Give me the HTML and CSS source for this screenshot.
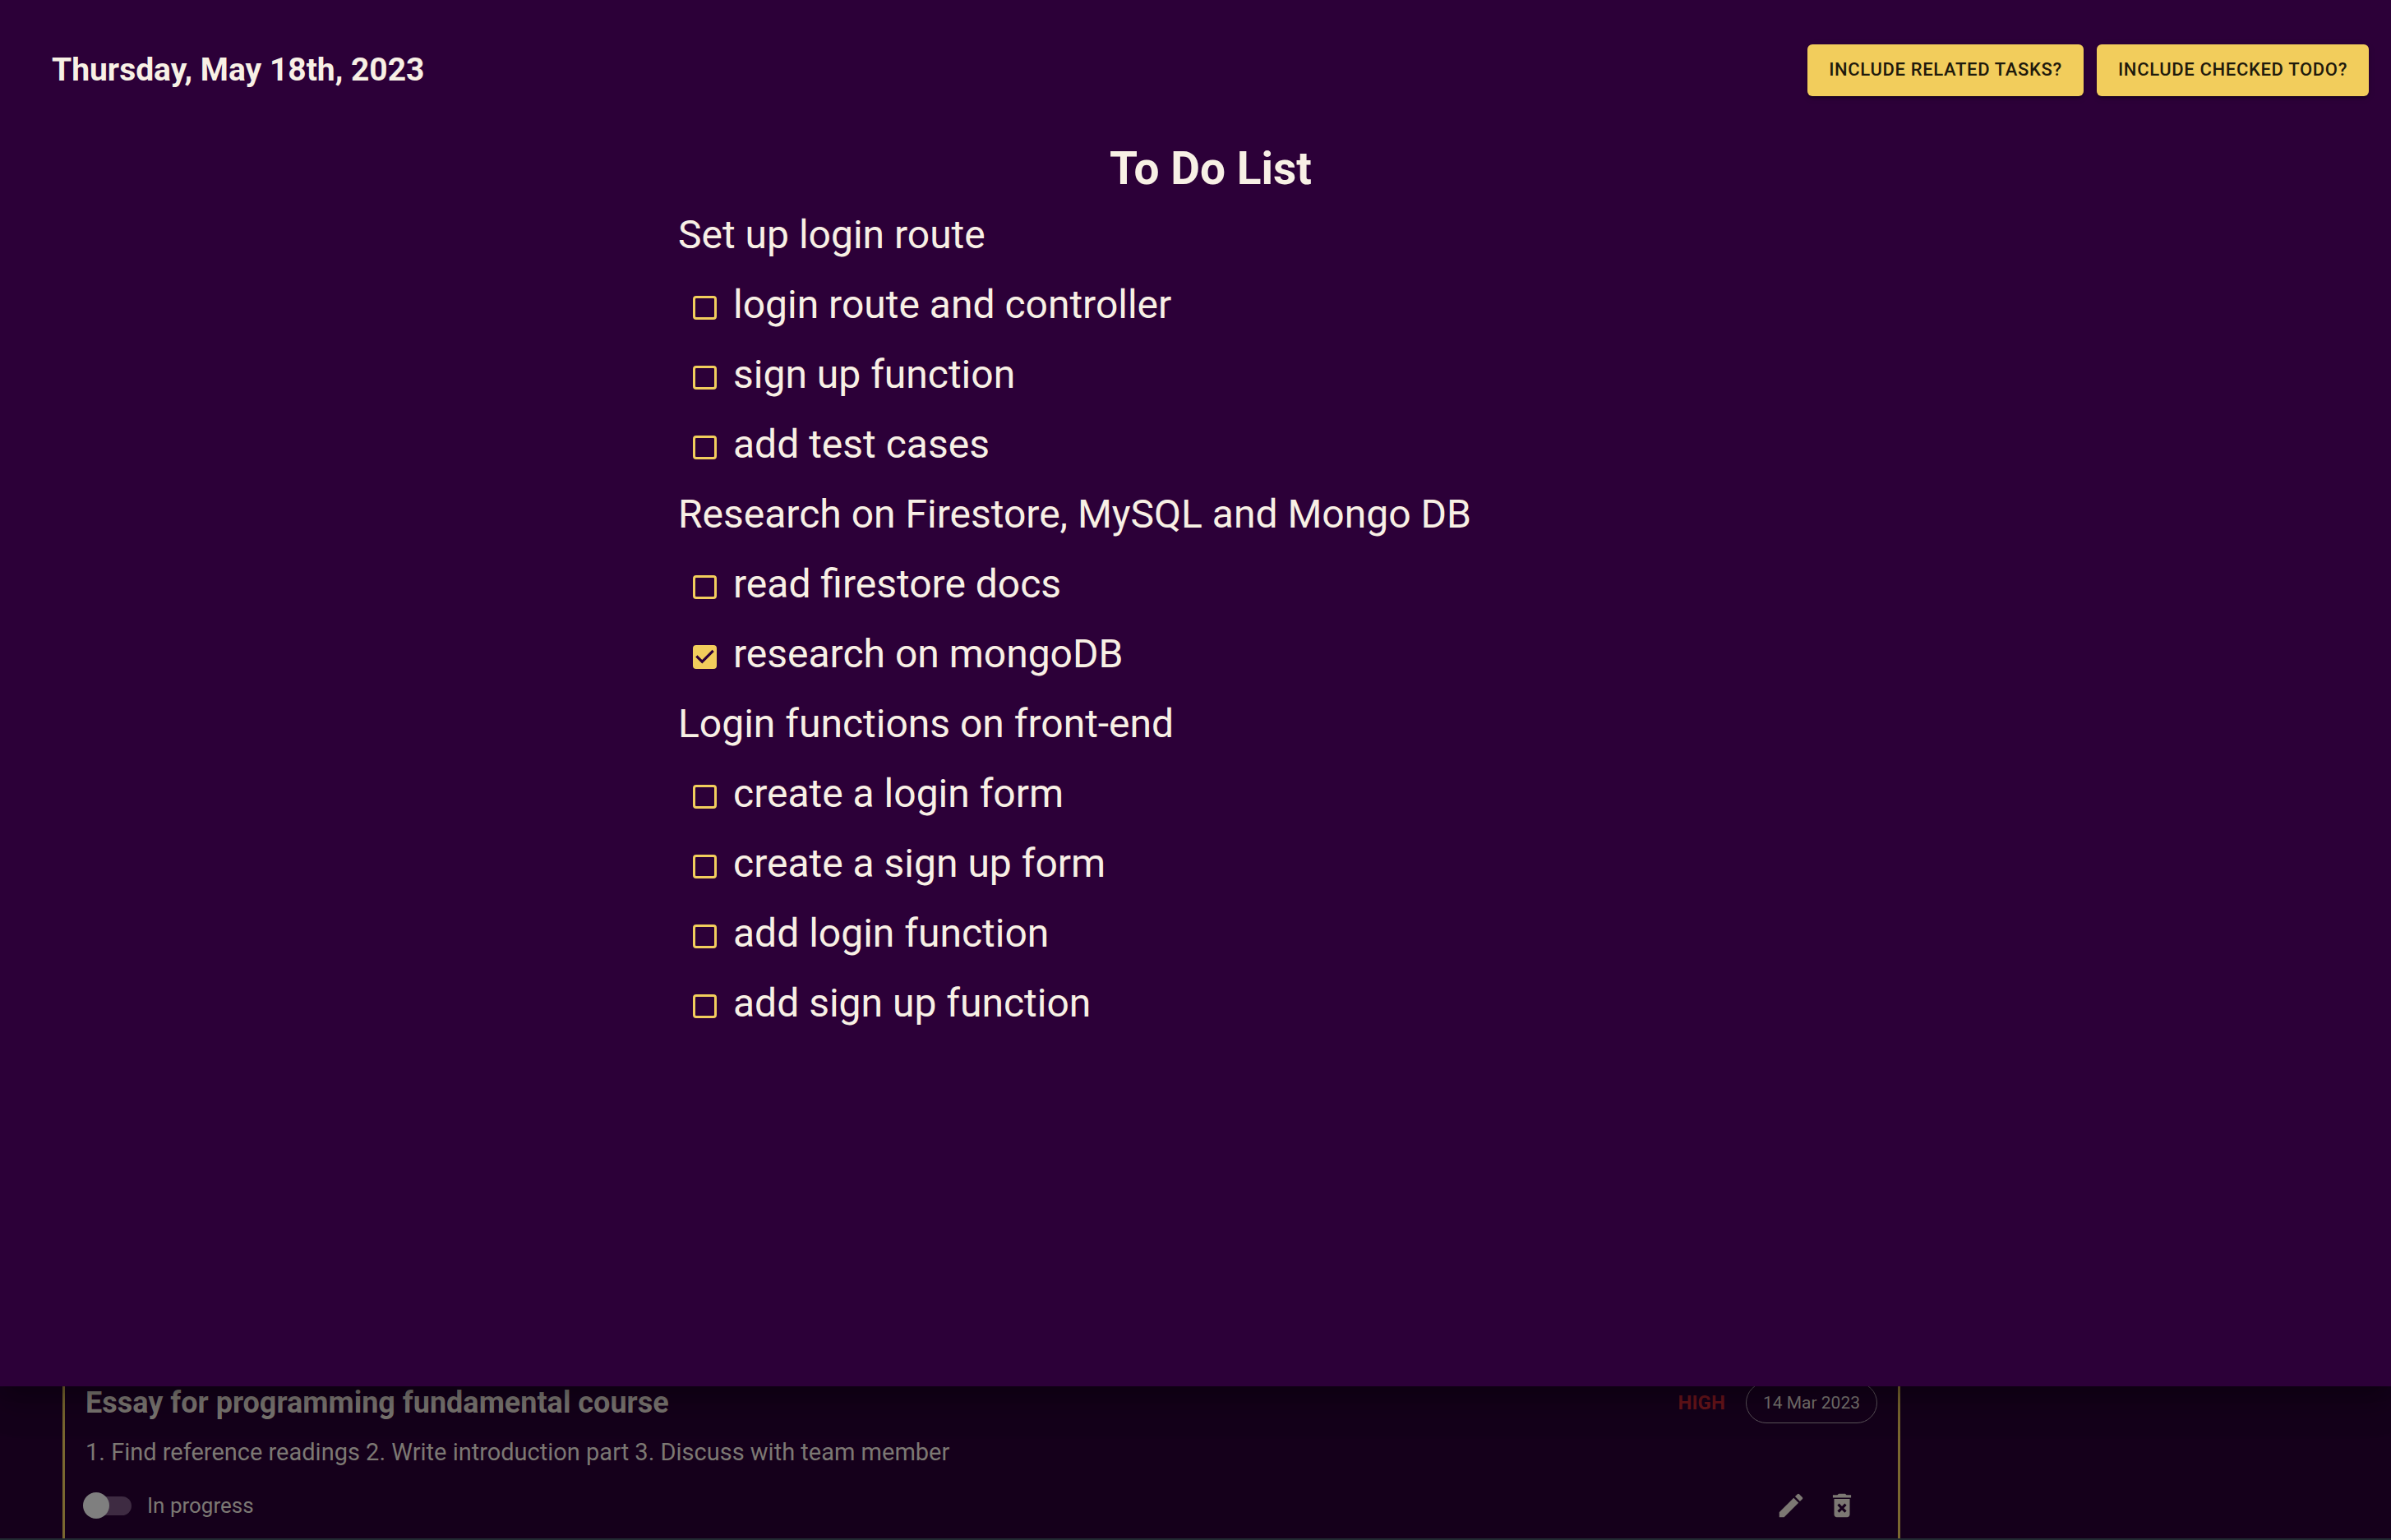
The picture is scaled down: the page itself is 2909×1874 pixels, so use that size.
FILE: index.html
```
<!DOCTYPE html>
<html lang="en">
<head>
<meta charset="utf-8">
<title>To Do List</title>
<link rel="stylesheet" href="styles.css">
</head>
<body>
<div class="app">
  <section class="dialog" aria-labelledby="dialog-title">
    <header class="topbar">
      <h2 class="date">Thursday, May 18th, 2023</h2>
      <div class="actions">
        <button class="btn" type="button">INCLUDE RELATED TASKS?</button>
        <button class="btn" type="button">INCLUDE CHECKED TODO?</button>
      </div>
    </header>
    <main class="content">
      <h1 class="title" id="dialog-title">To Do List</h1>
      <div class="list">
        <p class="task">Set up login route</p>
        <label class="todo"><input class="check" type="checkbox"><span>login route and controller</span></label>
        <label class="todo"><input class="check" type="checkbox"><span>sign up function</span></label>
        <label class="todo"><input class="check" type="checkbox"><span>add test cases</span></label>
        <p class="task">Research on Firestore, MySQL and Mongo DB</p>
        <label class="todo"><input class="check" type="checkbox"><span>read firestore docs</span></label>
        <label class="todo"><input class="check" type="checkbox" checked><span>research on mongoDB</span></label>
        <p class="task">Login functions on front-end</p>
        <label class="todo"><input class="check" type="checkbox"><span>create a login form</span></label>
        <label class="todo"><input class="check" type="checkbox"><span>create a sign up form</span></label>
        <label class="todo"><input class="check" type="checkbox"><span>add login function</span></label>
        <label class="todo"><input class="check" type="checkbox"><span>add sign up function</span></label>
      </div>
    </main>
  </section>
  <section class="board">
    <article class="card">
      <div class="row row-top">
        <h3 class="card-title">Essay for programming fundamental course</h3>
        <div class="meta">
          <span class="priority">HIGH</span>
          <span class="chip">14 Mar 2023</span>
        </div>
      </div>
      <p class="desc">1. Find reference readings 2. Write introduction part 3. Discuss with team member</p>
      <div class="row">
        <label class="progress"><input class="switch" type="checkbox" role="switch"><span>In progress</span></label>
        <div class="tools">
          <button class="icon-btn" type="button" aria-label="Edit">
            <svg viewBox="0 0 24 24"><path d="M3 17.25V21h3.75L17.81 9.94l-3.75-3.75L3 17.25zM20.71 7.04c.39-.39.39-1.02 0-1.41l-2.34-2.34a.9959.9959 0 0 0-1.41 0l-1.83 1.83 3.75 3.75 1.83-1.83z"/></svg>
          </button>
          <button class="icon-btn" type="button" aria-label="Delete">
            <svg viewBox="0 0 24 24"><path d="M6 19c0 1.100.9 2 2 2h8c1.100 0 2-.9 2-2V7H6v12zm2.460-7.120 1.410-1.410L12 12.590l2.120-2.120 1.410 1.410L13.410 14l2.120 2.120-1.410 1.410L12 15.410l-2.120 2.120-1.410-1.410L10.590 14l-2.130-2.120zM15.500 4l-1-1h-5l-1 1H5v2h14V4z"/></svg>
          </button>
        </div>
      </div>
    </article>
  </section>
</div>
</body>
</html>
```
FILE: styles.css
```
* { box-sizing: border-box; }
html, body { height: 100%; }
body {
  margin: 0;
  background: #15001b;
  color: #f8f0e5;
  font-family: Roboto, "Liberation Sans", sans-serif;
  overflow: hidden;
}
h1, h2, h3, p { margin: 0; }
.app { display: flex; flex-direction: column; height: 100%; }

/* Full-width sheet over the dimmed board */
.dialog {
  flex: 1;
  position: relative;
  background: #2c0038;
  box-shadow: 0 11px 15px -7px rgba(0, 0, 0, .2), 0 24px 38px 3px rgba(0, 0, 0, .14), 0 9px 46px 8px rgba(0, 0, 0, .12);
}
.topbar {
  display: flex;
  align-items: center;
  justify-content: space-between;
  padding: 54px 27px 0 63px;
}
.date { font-size: 39px; line-height: 63px; font-weight: 700; }
.actions { display: flex; gap: 16px; }
.btn {
  height: 63px;
  padding: 0 26px 2px;
  border: 0;
  border-radius: 6px;
  background: #f2cd5c;
  color: #1f1a0c;
  font: 500 22px/60px Roboto, sans-serif;
  letter-spacing: .03em;
  box-shadow: 0 4px 2px -2px rgba(0, 0, 0, .2), 0 3px 3px rgba(0, 0, 0, .14), 0 2px 8px rgba(0, 0, 0, .12);
}
.content { padding: 56px 25px 0 825px; }
.title {
  font-size: 55px;
  line-height: 64px;
  font-weight: 700;
  text-align: center;
  margin-right: 763px;
}
.list { padding-top: 6px; }
.task { font-size: 48px; line-height: 85px; }
.todo {
  display: flex;
  align-items: center;
  gap: 20px;
  padding-left: 18px;
  font-size: 48px;
  line-height: 85px;
}
.check {
  appearance: none;
  width: 29px;
  height: 29px;
  margin: 8px 0 0;
  border: 3px solid #f2cd5c;
  border-radius: 4px;
}
.check:checked {
  background: #f2cd5c url("data:image/svg+xml,%3Csvg xmlns='http://www.w3.org/2000/svg' viewBox='0 0 18 18'%3E%3Cpath d='M7 14L2 9l1.410-1.410L7 11.170l7.590-7.590L16 5z' fill='%232c0038'/%3E%3C/svg%3E") center / 29px no-repeat;
}

.board {
  padding: 0 597px 0 76px;
  border-bottom: 2px solid #232b33;
}
.card {
  border: solid #7a6730;
  border-width: 0 3px;
  padding: 0 25px 16px;
  color: #7c7873;
}
.row { display: flex; align-items: center; justify-content: space-between; }
.row-top { align-items: flex-start; }
.card-title { font-size: 36px; line-height: 40px; font-weight: 700; }
.meta { display: flex; align-items: flex-start; gap: 25px; font-size: 24px; }
.priority { color: #6a151b; font-weight: 700; line-height: 40px; }
.chip {
  padding: 0 20px;
  border: 1px solid #5c555b;
  border-radius: 25px;
  font-size: 21px;
  line-height: 48px;
  margin: -5px 0 0;
}
.desc { font-size: 29px; line-height: 40px; margin: 15px 0 21px; }
.progress { display: flex; align-items: center; gap: 19px; font-size: 26px; line-height: 48px; }
.switch {
  appearance: none;
  display: flex;
  align-items: center;
  width: 54px;
  height: 23px;
  margin: 0 0 0 2px;
  border-radius: 12px;
  background: #3e2b42;
}
.switch::before {
  content: "";
  width: 32px;
  height: 32px;
  margin-left: -5px;
  flex: none;
  border-radius: 50%;
  background: #7f7f7f;
}
.tools { display: flex; gap: 24px; padding-right: 24px; }
.icon-btn { width: 38px; height: 38px; padding: 0; border: 0; background: none; }
.icon-btn svg { display: block; width: 38px; height: 38px; fill: #7c7873; }
```
